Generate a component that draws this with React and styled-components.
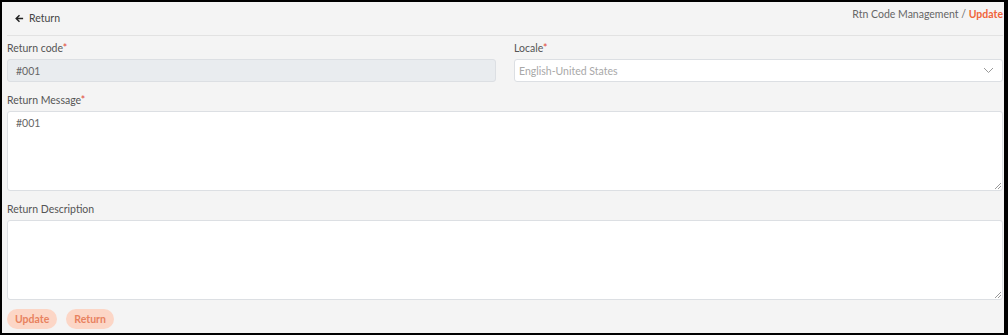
import React from 'react';
import styled, { createGlobalStyle } from 'styled-components';

const GlobalStyle = createGlobalStyle`
  html, body {
    margin: 0;
    padding: 0;
    background: #000;
  }
  * {
    box-sizing: border-box;
  }
`;

const Frame = styled.div`
  width: 1008px;
  height: 335px;
  border: 2px solid #000;
  border-right-width: 4px;
  background: #f4f4f4;
  font-family: Lato, "Open Sans", sans-serif;
  color: #555;
  padding: 0 1px 0 5px;
  display: flex;
  flex-direction: column;
`;

const Header = styled.div`
  display: flex;
  justify-content: space-between;
  align-items: flex-start;
  height: 34px;
  border-bottom: 1px solid #e2e2e2;
`;

const BackLink = styled.a`
  display: flex;
  align-items: center;
  gap: 5px;
  margin: 10px 0 0 8px;
  font-size: 10.5px;
  color: #444;
  cursor: pointer;
`;

const Crumbs = styled.div`
  margin-top: 6px;
  font-size: 10.5px;
  color: #666;
`;

const Current = styled.span`
  color: #f0653a;
  font-weight: 700;
`;

const Body = styled.div`
  display: flex;
  flex-direction: column;
  padding: 5px 0 0;
`;

const Row = styled.div`
  display: grid;
  grid-template-columns: 1fr 1fr;
  column-gap: 18px;
`;

const Field = styled.div`
  display: flex;
  flex-direction: column;
  margin-bottom: ${p => p.$mb || 0}px;
`;

const Label = styled.label`
  font-size: 10.5px;
  color: #555;
  line-height: 14px;
  margin-bottom: 4px;
`;

const Req = styled.span`
  color: #e04a3a;
`;

const Input = styled.div`
  height: 23px;
  border: 1px solid #dcdfe3;
  border-radius: 3px;
  background: ${p => (p.$disabled ? '#e9ecef' : '#fff')};
  font-size: 10.5px;
  color: ${p => (p.$muted ? '#a8a8a8' : '#666')};
  display: flex;
  align-items: center;
  justify-content: space-between;
  padding: 0 8px 0 ${p => (p.$muted ? 4 : 8)}px;
`;

const TextArea = styled.div`
  position: relative;
  height: 80px;
  border: 1px solid #dcdfe3;
  border-radius: 3px;
  background: #fff;
  font-size: 10.5px;
  color: #666;
  padding: 5px 8px;
`;

const Grip = styled.svg`
  position: absolute;
  right: 1px;
  bottom: 1px;
`;

const Actions = styled.div`
  display: flex;
  gap: 9px;
  margin-top: 9px;
`;

const Pill = styled.button`
  height: 20px;
  padding: 0 8px;
  border: none;
  border-radius: 10px;
  background: #fcd6c6;
  color: #e8825f;
  font-family: Lato, sans-serif;
  font-size: 10.5px;
  font-weight: 700;
`;

const Resize = () => (
  <Grip width="7" height="7" viewBox="0 0 7 7">
    <path d="M7 1 L1 7 M7 4 L4 7" stroke="#999" strokeWidth="1" />
  </Grip>
);

export default function App() {
  return (
    <>
      <GlobalStyle />
      <Frame>
        <Header>
          <BackLink>
            <svg width="9" height="9" viewBox="0 0 10 10">
              <path d="M9 5 H1.5 M5 1.3 L1.3 5 L5 8.7" stroke="#222" strokeWidth="1.6" fill="none" />
            </svg>
            Return
          </BackLink>
          <Crumbs>
            Rtn Code Management / <Current>Update</Current>
          </Crumbs>
        </Header>
        <Body>
          <Row>
            <Field $mb={11}>
              <Label>Return code<Req>*</Req></Label>
              <Input $disabled>#001</Input>
            </Field>
            <Field $mb={11}>
              <Label>Locale<Req>*</Req></Label>
              <Input $muted>
                English-United States
                <svg width="11" height="7" viewBox="0 0 11 7">
                  <path d="M1 1 L5.5 5.5 L10 1" stroke="#999" strokeWidth="1" fill="none" />
                </svg>
              </Input>
            </Field>
          </Row>
          <Field $mb={11}>
            <Label>Return Message<Req>*</Req></Label>
            <TextArea>
              #001
              <Resize />
            </TextArea>
          </Field>
          <Field>
            <Label>Return Description</Label>
            <TextArea>
              <Resize />
            </TextArea>
          </Field>
          <Actions>
            <Pill>Update</Pill>
            <Pill>Return</Pill>
          </Actions>
        </Body>
      </Frame>
    </>
  );
}
